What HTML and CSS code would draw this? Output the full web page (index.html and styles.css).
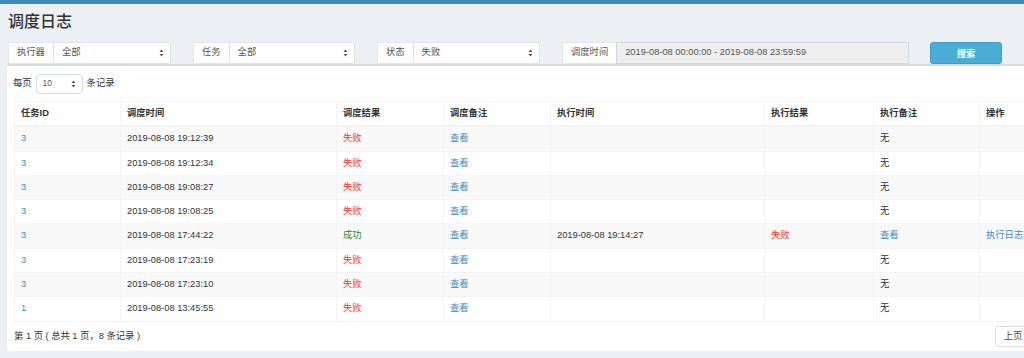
FILE: index.html
```html
<!DOCTYPE html>
<html lang="zh-CN">
<head>
  <meta charset="UTF-8">
  <title>调度日志</title>
  <link rel="stylesheet" href="styles.css">
</head>
<body>
  <!-- Top Bar -->
  <div class="topbar"></div>

  <!-- Page Header -->
  <section class="content-header">
    <h1>调度日志</h1>
  </section>

  <!-- Filters -->
  <div class="filters">
    <div class="input-group g-exec">
      <span class="addon">执行器</span>
      <span class="select">全部
        <svg class="caret" width="5" height="8" viewBox="0 0 5 8"><path d="M2.5 0.5 L4.5 3 H0.5 Z M2.5 7.5 L4.5 5 H0.5 Z" fill="#555"/></svg>
      </span>
    </div>
    <div class="input-group g-job">
      <span class="addon">任务</span>
      <span class="select">全部
        <svg class="caret" width="5" height="8" viewBox="0 0 5 8"><path d="M2.5 0.5 L4.5 3 H0.5 Z M2.5 7.5 L4.5 5 H0.5 Z" fill="#555"/></svg>
      </span>
    </div>
    <div class="input-group g-status">
      <span class="addon">状态</span>
      <span class="select">失败
        <svg class="caret" width="5" height="8" viewBox="0 0 5 8"><path d="M2.5 0.5 L4.5 3 H0.5 Z M2.5 7.5 L4.5 5 H0.5 Z" fill="#555"/></svg>
      </span>
    </div>
    <div class="input-group g-time">
      <span class="addon">调度时间</span>
      <span class="date-input">2019-08-08 00:00:00 - 2019-08-08 23:59:59</span>
    </div>
    <button class="search-btn">搜索</button>
  </div>

  <!-- Log Box -->
  <div class="box">
    <div class="page-size">
      每页
      <span class="select small">10
        <svg class="caret" width="5" height="8" viewBox="0 0 5 8"><path d="M2.5 0.5 L4.5 3 H0.5 Z M2.5 7.5 L4.5 5 H0.5 Z" fill="#555"/></svg>
      </span>
      条记录
    </div>

    <table class="log-table">
      <colgroup>
        <col style="width:106px">
        <col style="width:216px">
        <col style="width:107px">
        <col style="width:107px">
        <col style="width:214px">
        <col style="width:109px">
        <col style="width:106px">
        <col style="width:107px">
      </colgroup>
      <thead>
        <tr>
          <th>任务ID</th>
          <th>调度时间</th>
          <th>调度结果</th>
          <th>调度备注</th>
          <th>执行时间</th>
          <th>执行结果</th>
          <th>执行备注</th>
          <th>操作</th>
        </tr>
      </thead>
      <tbody>
        <tr>
          <td><a href="#">3</a></td>
          <td>2019-08-08 19:12:39</td>
          <td class="fail">失败</td>
          <td><a href="#">查看</a></td>
          <td></td>
          <td></td>
          <td>无</td>
          <td></td>
        </tr>
        <tr>
          <td><a href="#">3</a></td>
          <td>2019-08-08 19:12:34</td>
          <td class="fail">失败</td>
          <td><a href="#">查看</a></td>
          <td></td>
          <td></td>
          <td>无</td>
          <td></td>
        </tr>
        <tr>
          <td><a href="#">3</a></td>
          <td>2019-08-08 19:08:27</td>
          <td class="fail">失败</td>
          <td><a href="#">查看</a></td>
          <td></td>
          <td></td>
          <td>无</td>
          <td></td>
        </tr>
        <tr>
          <td><a href="#">3</a></td>
          <td>2019-08-08 19:08:25</td>
          <td class="fail">失败</td>
          <td><a href="#">查看</a></td>
          <td></td>
          <td></td>
          <td>无</td>
          <td></td>
        </tr>
        <tr>
          <td><a href="#">3</a></td>
          <td>2019-08-08 17:44:22</td>
          <td class="ok">成功</td>
          <td><a href="#">查看</a></td>
          <td>2019-08-08 19:14:27</td>
          <td class="fail">失败</td>
          <td><a href="#">查看</a></td>
          <td><a href="#">执行日志</a></td>
        </tr>
        <tr>
          <td><a href="#">3</a></td>
          <td>2019-08-08 17:23:19</td>
          <td class="fail">失败</td>
          <td><a href="#">查看</a></td>
          <td></td>
          <td></td>
          <td>无</td>
          <td></td>
        </tr>
        <tr>
          <td><a href="#">3</a></td>
          <td>2019-08-08 17:23:10</td>
          <td class="fail">失败</td>
          <td><a href="#">查看</a></td>
          <td></td>
          <td></td>
          <td>无</td>
          <td></td>
        </tr>
        <tr>
          <td><a href="#">1</a></td>
          <td>2019-08-08 13:45:55</td>
          <td class="fail">失败</td>
          <td><a href="#">查看</a></td>
          <td></td>
          <td></td>
          <td>无</td>
          <td></td>
        </tr>
      </tbody>
    </table>

    <div class="box-footer">
      <span class="info">第 1 页 ( 总共 1 页，8 条记录 )</span>
      <div class="pager">
        <a href="#" class="page-btn">上页</a>
        <a href="#" class="page-btn">下页</a>
      </div>
    </div>
  </div>
</body>
</html>
```

FILE: styles.css
```css
/* Global Styles */
* {
  box-sizing: border-box;
  margin: 0;
  padding: 0;
}
html, body {
  width: 1024px;
  height: 358px;
  overflow: hidden;
}
body {
  background: #ecf0f5;
  color: #333;
  font-family: "Liberation Sans", "Noto Sans CJK SC", sans-serif;
  font-size: 9.3px;
  line-height: 13.3px;
}
a {
  color: #3c8dbc;
  text-decoration: none;
}

/* Top Bar */
.topbar {
  height: 4px;
  background: #3c8dbc;
}

/* Page Header */
.content-header {
  padding: 7px 8px 0;
}
.content-header h1 {
  font-size: 16px;
  font-weight: 500;
  line-height: 22px;
  color: #333;
}

/* Filters */
.filters {
  display: flex;
  gap: 22px;
  padding: 9px 8px 0;
  height: 31px;
}
.input-group {
  display: flex;
  height: 22px;
}
.g-exec { width: 163px; }
.g-job { width: 162px; }
.g-status { width: 163px; }
.g-time { width: 347px; }
.addon {
  display: flex;
  align-items: center;
  padding: 0 8px;
  background: #fff;
  border: 1px solid #e3e6ea;
  border-right: none;
  color: #555;
  white-space: nowrap;
}
.select {
  position: relative;
  flex: 1;
  display: flex;
  align-items: center;
  padding: 0 8px;
  background: #fff;
  border: 1px solid #dfe2e6;
  border-radius: 3px;
  color: #555;
}
.caret {
  position: absolute;
  right: 6px;
  top: 50%;
  margin-top: -4px;
}
.date-input {
  flex: 1;
  display: flex;
  align-items: center;
  padding: 0 8px;
  background: #eee;
  border: 1px solid #d2d6de;
  color: #555;
}
.search-btn {
  width: 72px;
  height: 22px;
  margin-left: -1px;
  background: #4badd5;
  border: 1px solid #3e9cc3;
  border-radius: 3px;
  color: #fff;
  font-family: inherit;
  font-size: 9.3px;
  font-weight: bold;
}

/* Log Box */
.box {
  width: 1086px;
  margin-left: 7px;
  padding: 8px 7px 4px;
  background: #fff;
  border-top: 2px solid #d6dbe1;
}
.page-size {
  display: flex;
  align-items: center;
  gap: 4px;
  height: 20px;
  margin-left: -1px;
}
.select.small {
  flex: none;
  width: 47px;
  height: 20px;
  border-color: #d8dbdf;
  border-radius: 4px;
  padding: 0 6px;
  font-size: 8.5px;
}

/* Table */
.log-table {
  width: 1072px;
  margin-top: 7px;
  table-layout: fixed;
  border-collapse: collapse;
}
.log-table th,
.log-table td {
  padding: 5px 6px;
  border: 1px solid #f4f4f4;
  text-align: left;
  white-space: nowrap;
  line-height: 13.3px;
}
.log-table th {
  font-weight: bold;
  border-bottom: 2px solid #f4f4f4;
}
.log-table tbody tr:nth-child(odd) {
  background: #f9f9f9;
}
.fail {
  color: #f3342b;
}
.ok {
  color: #2f8a2a;
}

/* Footer */
.box-footer {
  display: flex;
  justify-content: space-between;
  align-items: center;
  margin-top: 4px;
  height: 21px;
}
.pager {
  display: flex;
  margin-right: 19px;
}
.page-btn {
  display: flex;
  align-items: center;
  height: 21px;
  padding: 0 8px;
  border: 1px solid #ddd;
  color: #444;
  background: #fff;
}
.page-btn:first-child {
  border-radius: 3px 0 0 3px;
}
.page-btn + .page-btn {
  border-left: none;
  border-radius: 0 3px 3px 0;
}
```
